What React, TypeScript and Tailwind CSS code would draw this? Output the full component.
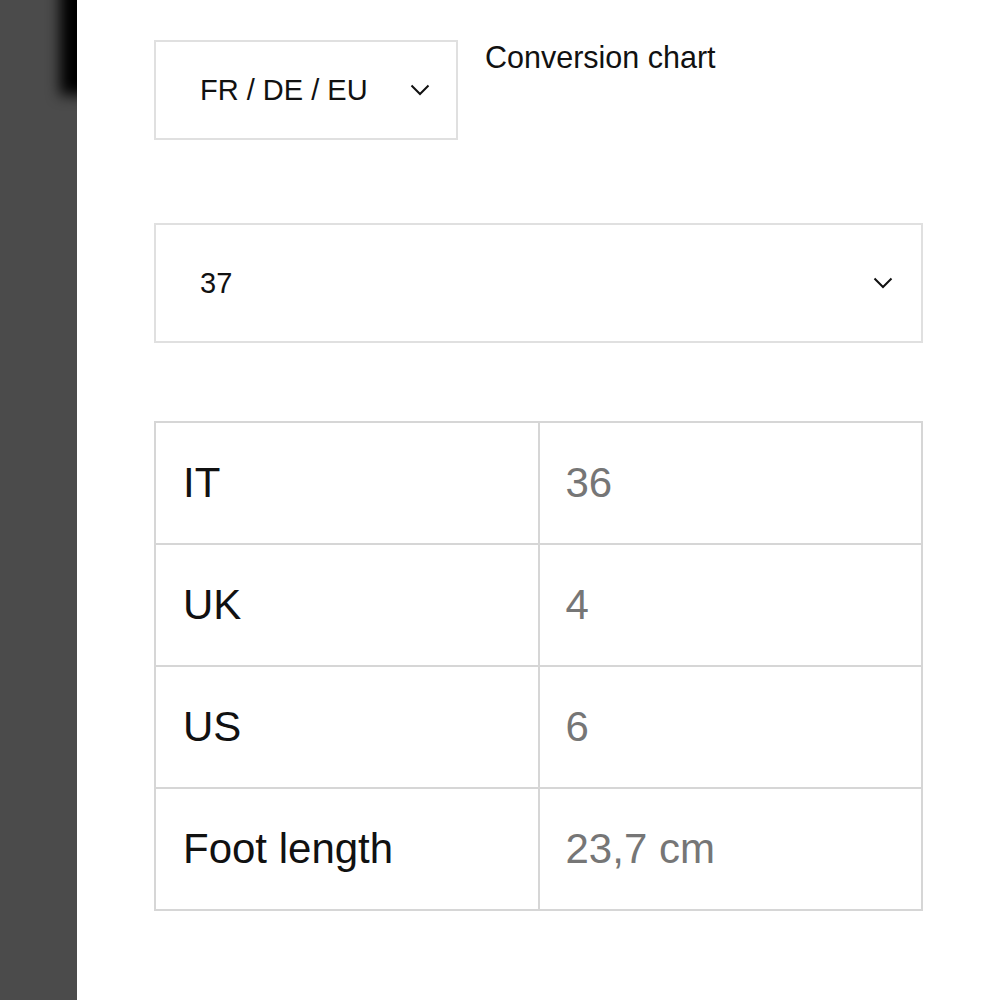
import React from "react";

const rows = [
  { label: "IT", value: "36" },
  { label: "UK", value: "4" },
  { label: "US", value: "6" },
  { label: "Foot length", value: "23,7 cm" },
];

function Chevron() {
  return (
    <svg width="20" height="12" viewBox="0 0 20 12" fill="none" className="shrink-0">
      <polyline points="1.5,1.5 10,10 18.5,1.5" stroke="#111" strokeWidth="2" />
    </svg>
  );
}

export default function App() {
  return (
    <div className="flex min-h-screen font-['Liberation_Sans',Arial,sans-serif] text-[#111]">
      {/* barra lateral oscura */}
      <div className="relative w-[77px] shrink-0 overflow-hidden bg-[#4b4b4b]">
        <div className="absolute left-[60px] top-[-30px] h-[125px] w-[40px] bg-black blur-[7px]" />
      </div>

      <main className="flex-1 bg-white pl-[77px] pt-10">
        <div className="w-[769px]">
          <div className="flex items-start gap-[27px]">
            <div className="flex h-[100px] w-[304px] items-center border-2 border-[#e0e0e0] pl-[44px] pr-[26px]">
              <span className="flex-1 text-[29px] leading-none">FR / DE / EU</span>
              <Chevron />
            </div>
            <span className="mt-[2px] text-[30.5px] leading-[30px]">Conversion chart</span>
          </div>

          <div className="mt-[83px] flex h-[120px] items-center border-2 border-[#e0e0e0] pl-[44px] pr-[28px]">
            <span className="flex-1 text-[29px] leading-none">37</span>
            <Chevron />
          </div>

          <table className="mt-[78px] w-full border-collapse">
            <tbody>
              {rows.map((r) => (
                <tr key={r.label} className="h-[122px]">
                  <td className="w-1/2 border-2 border-[#d6d6d6] pl-[27px] text-[42px] leading-none">{r.label}</td>
                  <td className="w-1/2 border-2 border-[#d6d6d6] pl-[26px] text-[42px] leading-none text-[#767676]">{r.value}</td>
                </tr>
              ))}
            </tbody>
          </table>
        </div>
      </main>
    </div>
  );
}
